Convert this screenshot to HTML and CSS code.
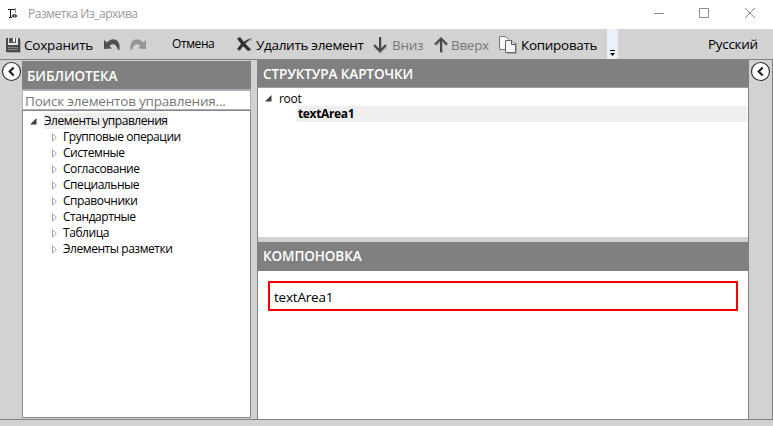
FILE: index.html
```html
<!DOCTYPE html>
<html lang="ru">
<head>
<meta charset="utf-8">
<title>Разметка Из_архива</title>
<link rel="stylesheet" href="styles.css">
</head>
<body>
<div class="window">
  <header class="titlebar">
    <svg class="app-icon" width="10" height="12" viewBox="0 0 10 12"><path d="M2.500 1v9M0 1.500h7M1 9.500h3" stroke="#222" fill="none"/><path d="M7.500 0v5" stroke="#999"/><path d="M3.500 8q3-4 6 0q-3 3.500-6 0z" fill="#333"/><circle cx="6.500" cy="8" r=".7" fill="#fff"/></svg>
    <span class="caption">Разметка Из_архива</span>
    <svg class="winbtns" width="102" height="12" viewBox="0 0 102 12" fill="none" stroke="#8c8c8c"><path d="M0 6.500h10M45.500 1.500h9v9h-9zM91 1l10 10M101 1l-10 10"/></svg>
  </header>
  <div class="toolbar">
    <svg class="i-save" width="17" height="17" viewBox="0 0 17 17"><path d="M2 2h12.500l1.500 1.500V16H2z" fill="#888" opacity=".6"/><path d="M1 1h13l1 1v13H1z" fill="#4a4a4a"/><path d="M3 1h10v7H3z" fill="#e8e8e8"/><path d="M4 1h7v5H4z" fill="#555"/><path d="M8 1h2v4H8z" fill="#fff"/><path d="M3 10.500h10M3 12.500h10" stroke="#888"/></svg>
    <span class="t t-save">Сохранить</span>
    <svg class="i-undo" width="18" height="13" viewBox="0 0 18 13"><path d="M1 2v9l8-.5-2.500-2.500c3-3 7-2 8.500 4l1.500-.5C18 2 10-2 4 4.500z" fill="#505050"/></svg>
    <svg class="i-redo" width="18" height="13" viewBox="0 0 18 13"><path d="M17 2v9l-8-.5 2.500-2.500c-3-3-7-2-8.500 4l-1.500-.5C0 2 8-2 14 4.500z" fill="#969696"/></svg>
    <span class="t t-cancel">Отмена</span>
    <svg class="i-del" width="18" height="18" viewBox="0 0 18 18"><path d="M3 3q5 7 12 12M2 15Q7 6 16 3" fill="none" stroke="#999" stroke-width="3" opacity=".5"/><path d="M1 2.500L4 1q4 6 11 12.500l-3 1.500Q5 9 1 2.500z" fill="#303030"/><path d="M1 13Q6 5 16 2q-7 4-12 12.500z" fill="#303030"/></svg>
    <span class="t t-del">Удалить элемент</span>
    <svg class="i-down" width="16" height="18" viewBox="0 0 16 18" fill="none"><path d="M8.500 2v14M3 10.500L8.500 16l5.500-5.500" stroke="#aaa" stroke-width="3"/><path d="M8 1v14M2 9l6 6 6-6" stroke="#484848" stroke-width="2"/></svg>
    <span class="t t-down">Вниз</span>
    <svg class="i-up" width="16" height="18" viewBox="0 0 16 18" fill="none"><path d="M8.500 17V4M3 9l5.500-5.500L14 9" stroke="#aaa" stroke-width="3"/><path d="M8 16V3M2 8.500l6-6 6 6" stroke="#484848" stroke-width="2"/></svg>
    <span class="t t-up">Вверх</span>
    <svg class="i-copy" width="19" height="18" viewBox="0 0 19 18"><path d="M8 7h10v11H8z" fill="#888" opacity=".6"/><path d="M.5 .5h6l3 3v10h-9z" fill="#f8f8f8" stroke="#777"/><path d="M6.500 4.500h6l4 4v8h-10z" fill="#f7f7f7" stroke="#666"/><path d="M12.500 4.500v4h4" fill="#ddd" stroke="#555"/></svg>
    <span class="t t-copy">Копировать</span>
    <div class="overflow"><svg width="5" height="6" viewBox="0 0 5 6"><path d="M0 0h5v1H0zM0 3h5L2.500 6z"/></svg></div>
    <span class="t t-lang">Русский</span>
  </div>
  <main class="workspace">
    <aside class="rail rail-left"><svg width="20" height="20" viewBox="0 0 20 20"><circle cx="9.500" cy="9.500" r="9" fill="#fff" stroke="#333" stroke-width="1.200"/><path d="M11.700 5.500L7.700 9.500l4 4" fill="none" stroke="#222" stroke-width="2.200"/></svg></aside>
    <section class="library">
      <h2 class="head"><span class="h-lib">БИБЛИОТЕКА</span></h2>
      <div class="search"><span>Поиск элементов управления...</span></div>
      <ul class="tree">
        <li class="root"><svg width="7" height="7" viewBox="0 0 7 7"><path d="M6.500 0v6.500H0z" fill="#404040"/></svg><span>Элементы управления</span></li>
        <li><svg width="5" height="9" viewBox="0 0 5 9"><path d="M.5 .8v7.400l3.800-3.700z"/></svg><span>Групповые операции</span></li>
        <li><svg width="5" height="9" viewBox="0 0 5 9"><path d="M.5 .8v7.400l3.800-3.700z"/></svg><span>Системные</span></li>
        <li><svg width="5" height="9" viewBox="0 0 5 9"><path d="M.5 .8v7.400l3.800-3.700z"/></svg><span>Согласование</span></li>
        <li><svg width="5" height="9" viewBox="0 0 5 9"><path d="M.5 .8v7.400l3.800-3.700z"/></svg><span>Специальные</span></li>
        <li><svg width="5" height="9" viewBox="0 0 5 9"><path d="M.5 .8v7.400l3.800-3.700z"/></svg><span>Справочники</span></li>
        <li><svg width="5" height="9" viewBox="0 0 5 9"><path d="M.5 .8v7.400l3.800-3.700z"/></svg><span>Стандартные</span></li>
        <li><svg width="5" height="9" viewBox="0 0 5 9"><path d="M.5 .8v7.400l3.800-3.700z"/></svg><span>Таблица</span></li>
        <li><svg width="5" height="9" viewBox="0 0 5 9"><path d="M.5 .8v7.400l3.800-3.700z"/></svg><span>Элементы разметки</span></li>
      </ul>
    </section>
    <div class="center">
      <section class="structure">
        <h2 class="head head-s"><span class="h-str">СТРУКТУРА КАРТОЧКИ</span></h2>
        <div class="s-root"><svg width="7" height="7" viewBox="0 0 7 7"><path d="M6.500 0v6.500H0z" fill="#404040"/></svg><span>root</span></div>
        <div class="s-item"><span>textArea1</span></div>
      </section>
      <section class="layout">
        <h2 class="head head-c"><span class="h-com">КОМПОНОВКА</span></h2>
        <div class="field"><span>textArea1</span></div>
      </section>
    </div>
    <aside class="rail rail-right"><svg width="20" height="20" viewBox="0 0 20 20"><circle cx="9.500" cy="9.500" r="9" fill="#fff" stroke="#333" stroke-width="1.200"/><path d="M11.700 5.500L7.700 9.500l4 4" fill="none" stroke="#222" stroke-width="2.200"/></svg></aside>
  </main>
  <footer class="status"></footer>
</div>
</body>
</html>
```
FILE: styles.css
```css
* { box-sizing: border-box; }
body { margin: 0; font-family: "Open Sans", "Noto Sans", sans-serif; font-size: 12px; color: #000; }
svg { display: block; flex: none; overflow: visible; }
span { white-space: nowrap; }
.window { width: 773px; height: 426px; display: flex; flex-direction: column; background: #d2d2d2; overflow: hidden; }
.titlebar { height: 29px; flex: none; background: #fff; display: flex; align-items: center; }
.app-icon { margin-left: 8px; margin-top: -2px; }
.caption { margin-left: 10px; margin-top: -2px; color: #999; font-size: 12px; letter-spacing: -.5px; }
.winbtns { margin-left: auto; margin-right: 17px; margin-top: -3px; }
.toolbar { height: 30px; flex: none; display: grid; align-items: center; line-height: 30px; font-size: 13.5px;
  grid-template-columns: 5px 19px 79px 26px 42px 65px 20px 116px 20px 41px 18px 48px 22px 86px 11px 90px 66px; }
.toolbar > :first-child { grid-column: 2; }
.toolbar > svg { margin-top: 2px; }
.toolbar > .i-undo, .toolbar > .i-redo { margin-top: 0; }
.toolbar .t { padding-top: 1px; height: 30px; letter-spacing: -.3px; }
.toolbar .t-save { letter-spacing: -.2px; }
.toolbar .t-cancel { font-size: 12px; padding: 0 0 0 1px; letter-spacing: -.4px; }
.toolbar .t-down, .toolbar .t-up { color: #777; }
.toolbar .t-lang { grid-column: 17; padding-top: 0; }
.overflow { height: 30px; background: #eaf1fb; border-radius: 0 3px 3px 0; padding: 21px 0 0 3px; }
.workspace { height: 361px; flex: none; display: flex; border-top: 1px solid #808080; border-bottom: 1px solid #808080; }
.rail { flex: none; padding-top: 2px; }
.rail-left { width: 22px; padding-left: 2px; }
.rail-right { width: 25px; padding-left: 2px; border-left: 1px solid #808080; border-right: 1px solid #808080; }
.library { width: 229px; margin: 1px 6px 1px 0; flex: none; display: flex; flex-direction: column; }
.head { margin: 0; background: #808080; color: #fff; font-size: 13.5px; font-weight: 600; letter-spacing: -.1px; height: 28px; line-height: 30px; padding-left: 5px; }
.head-s { height: 28px; line-height: 28px; border-bottom: 1px solid #a0a0a0; }
.head-c { height: 29px; line-height: 29px; }
.search { height: 21px; flex: none; background: #fff; border: 1px solid #abadb3; border-top-width: 2px; color: #777; font-size: 13.5px; letter-spacing: -.2px; line-height: 20px; padding-left: 2px; }
.tree { flex: 1; list-style: none; margin: 0; padding: 2px 0 0; background: #fff; border: 1px solid #828790; letter-spacing: -.45px; }
.tree li { height: 16px; line-height: 16px; display: flex; align-items: center; padding-left: 29px; }
.tree li svg { margin-right: 6px; fill: #fff; stroke: #999; stroke-width: .9; }
.tree li.root { padding-left: 7px; }
.tree li.root svg { margin-right: 7px; stroke: none; }
.root span { background: #efefef; }
.center { width: 491px; flex: none; display: flex; flex-direction: column; border-left: 1px solid #808080; }
.structure { height: 177px; flex: none; background: #fff; }
.s-root { display: flex; align-items: center; height: 16px; margin-top: 2px; padding-left: 7px; gap: 7px; letter-spacing: -.3px; }
.s-item { height: 16px; line-height: 16px; margin: 0 1px 0 39px; background: #efefef; font-weight: 700; letter-spacing: -.35px; padding-left: 1px; }
.layout { flex: 1; margin-top: 5px; background: #fff; }
.field { height: 30px; margin: 10px 10px 0; border: 2px solid #f00; line-height: 28px; padding-left: 4px; font-size: 13.5px; letter-spacing: -.2px; }
```
